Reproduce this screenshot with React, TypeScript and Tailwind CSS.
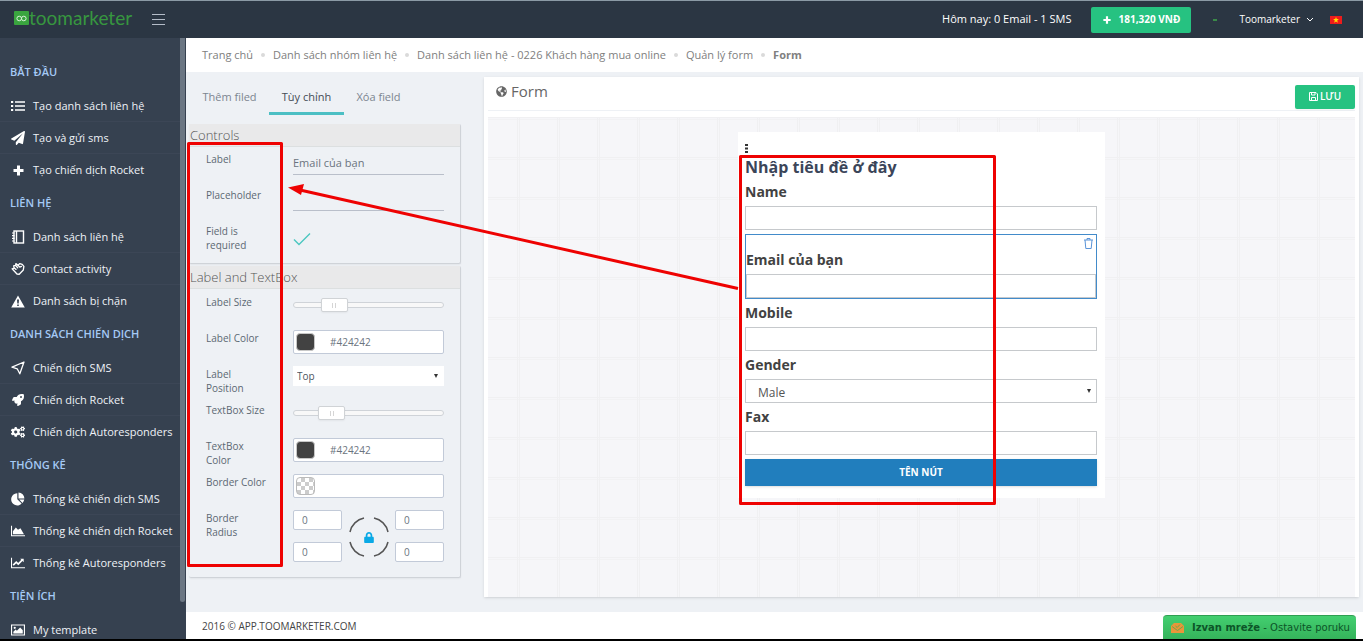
import React, { useState } from 'react';
import { FaPaperPlane, FaRocket, FaCogs, FaLock, FaGlobeAmericas } from 'react-icons/fa';

const PlusIcon = ({ className }: { className: string }) => (
  <svg viewBox="0 0 11 11" className={className} fill="currentColor">
    <path d="M4 .5h3V4h3.500v3H7v3.500H4V7H.5V4H4Z" />
  </svg>
);

const ListIcon = () => (
  <svg viewBox="0 0 14 12" className="w-3.5 h-3" fill="currentColor">
    <path d="M0 1h2.200v2H0zM0 5h2.200v2H0zM0 9h2.200v2H0zM4 1.200h10v1.500H4zM4 5.200h10v1.500H4zM4 9.200h10v1.500H4z" />
  </svg>
);

const NotebookIcon = () => (
  <svg viewBox="0 0 14 14" className="w-3.5 h-3.5" fill="none" stroke="currentColor">
    <rect x="3" y="1" width="9.500" height="12" strokeWidth="1.400" />
    <path d="M5.500 1v12" strokeWidth="1.400" />
    <path d="M1 3h2.500M1 5.600h2.500M1 8.300h2.500M1 11h2.500" strokeWidth="1.200" />
  </svg>
);

const HandIcon = () => (
  <svg viewBox="0 0 15 14" className="w-[15px] h-3.5" fill="none" stroke="currentColor" strokeWidth="1.400" strokeLinejoin="round" strokeLinecap="round">
    <path d="M1.200 6.800 3.500 6 2.800 3.600 5 3.200 5.200 1.200 7.500 3 9.500 1.200 12 2 13.800 4.200 13.200 8 8.800 12.600 6.400 12.400Z" />
    <path d="M5 3.200 7.200 5.600M7.500 3 9.400 5 11.200 4.200M3.500 6 5.400 7.400" />
  </svg>
);

const WarningIcon = () => (
  <svg viewBox="0 0 14 13" className="w-3.5 h-[13px]" fill="currentColor" fillRule="evenodd">
    <path d="M7 .5 13.800 12.500H.2ZM6 4.500 6.300 8.500H7.700L8 4.500ZM6.200 9.500V11H7.800V9.500Z" />
  </svg>
);

const PlaneOutline = () => (
  <svg viewBox="0 0 14 14" className="w-3.5 h-3.5" fill="none" stroke="currentColor" strokeWidth="1.300" strokeLinejoin="round">
    <path d="M13 1 1 6.200 6.200 7.800 8.800 12.800Z" />
  </svg>
);

const PieIcon = () => (
  <svg viewBox="0 0 14 14" className="w-3.5 h-3.5" fill="currentColor">
    <path d="M6.300 1.200V7.300L10.600 11.600A6.100 6.100 0 1 1 6.300 1.200Z" />
    <path d="M7.500.6A6 6 0 0 1 13.400 6.500H7.500ZM8.200 7.600H13.300A6 6 0 0 1 11.500 10.900Z" />
  </svg>
);

const AreaIcon = () => (
  <svg viewBox="0 0 16 12" className="w-[15px] h-3" fill="currentColor">
    <path d="M0 0h1.200v10.800H16V12H0ZM2.200 9.800V6.400L5.500 2 8 4.600 10.800 2.800 14.800 9.800Z" />
  </svg>
);

const LineIcon = () => (
  <svg viewBox="0 0 16 12" className="w-[15px] h-3" fill="currentColor">
    <path d="M0 0h1.200v10.800H16V12H0Z" />
    <path d="M2.500 8.500 6 5 8.300 7.200 13 2.500" fill="none" stroke="currentColor" strokeWidth="1.900" />
    <path d="M10.500 1H14.500V5Z" />
  </svg>
);

const PictureIcon = () => (
  <svg viewBox="0 0 15 12" className="w-[15px] h-3" fill="currentColor" fillRule="evenodd">
    <path d="M0 0H15V12H0ZM1.200 1.200V10.800H13.800V1.200Z" />
    <path d="M2.500 9.700V8L5 5.500 6.300 6.800 9.800 3.400 12.600 6.200V9.700Z" />
    <circle cx="4" cy="3.700" r="1.200" />
  </svg>
);

const SECTIONS = [
  {
    title: 'BẮT ĐẦU',
    items: [
      { label: 'Tạo danh sách liên hệ', icon: <ListIcon /> },
      { label: 'Tạo và gửi sms', icon: <FaPaperPlane /> },
      { label: 'Tạo chiến dịch Rocket', icon: <PlusIcon className="w-[11px] h-[11px]" /> },
    ],
  },
  {
    title: 'LIÊN HỆ',
    items: [
      { label: 'Danh sách liên hệ', icon: <NotebookIcon /> },
      { label: 'Contact activity', icon: <HandIcon /> },
      { label: 'Danh sách bị chặn', icon: <WarningIcon /> },
    ],
  },
  {
    title: 'DANH SÁCH CHIẾN DỊCH',
    items: [
      { label: 'Chiến dịch SMS', icon: <PlaneOutline /> },
      { label: 'Chiến dịch Rocket', icon: <FaRocket className="w-3 h-3" /> },
      { label: 'Chiến dịch Autoresponders', icon: <FaCogs className="w-[15px] h-3.5" /> },
    ],
  },
  {
    title: 'THỐNG KÊ',
    items: [
      { label: 'Thống kê chiến dịch SMS', icon: <PieIcon /> },
      { label: 'Thống kê chiến dịch Rocket', icon: <AreaIcon /> },
      { label: 'Thống kê Autoresponders', icon: <LineIcon /> },
    ],
  },
  {
    title: 'TIỆN ÍCH',
    items: [{ label: 'My template', icon: <PictureIcon /> }],
  },
];

const CRUMBS = ['Trang chủ', 'Danh sách nhóm liên hệ', 'Danh sách liên hệ - 0226 Khách hàng mua online', 'Quản lý form'];

const Header = () => (
  <header className="h-[38px] shrink-0 bg-[#2b3643] border-t border-[#8b9aa5] flex items-center text-white">
    <a href="#" className="ml-3.5 pb-1 flex items-center text-[#37963f]">
      <svg viewBox="0 0 15 14" className="w-[15px] h-3.5">
        <rect width="15" height="14" rx="1" fill="#3aa53f" />
        <circle cx="5.200" cy="7.500" r="2.300" fill="none" stroke="#d8f0d8" />
        <circle cx="9.800" cy="7.500" r="2.300" fill="none" stroke="#d8f0d8" />
      </svg>
      <span className="font-[Lato] text-[19px] leading-5">toomarketer</span>
    </a>
    <button aria-label="Menu" className="ml-5 flex flex-col gap-1">
      <span className="block w-[13px] h-px bg-[#b4bcc8]" />
      <span className="block w-[13px] h-px bg-[#b4bcc8]" />
      <span className="block w-[13px] h-px bg-[#b4bcc8]" />
    </button>
    <div className="ml-auto flex items-center">
      <span className="text-[11px]">Hôm nay: 0 Email - 1 SMS</span>
      <button className="ml-5 w-[100px] h-[26px] bg-[#26c281] rounded-xs flex items-center justify-center gap-2 text-[10px] font-bold">
        <PlusIcon className="w-2 h-2" />
        181,320 VNĐ
      </button>
      <span className="ml-[22px] w-1 h-0.5 bg-[#3a8a48]" />
      <button className="ml-[22px] flex items-center gap-1.5 text-[10px]">
        Toomarketer
        <svg viewBox="0 0 8 6" className="w-2 h-1.5" fill="none" stroke="currentColor">
          <path d="M1 1l3 3 3-3" />
        </svg>
      </button>
      <svg viewBox="0 0 12 8" className="ml-4 mr-[21px] w-3 h-2">
        <rect width="12" height="8" fill="#ee1c1c" />
        <path d="M6 1l.8 2h2.100L7.200 4.500l.7 2.200L6 5.400 4.100 6.700l.7-2.200L3.100 3h2.100z" fill="#ffde00" />
      </svg>
    </div>
  </header>
);

const Sidebar = () => (
  <nav className="w-[186px] shrink-0 bg-[#364150] overflow-hidden flex">
    <div className="flex-1 pt-[17px]">
      {SECTIONS.map((section) => (
        <div key={section.title}>
          <h3 className="h-[35px] pl-2.5 flex items-center text-[11px] font-semibold text-[#a5c9f5]">{section.title}</h3>
          <ul>
            {section.items.map((item) => (
              <li key={item.label} className="border-b border-[#3c4656] last:border-transparent">
                <a href="#" className="h-[31px] pt-px pl-[11px] flex items-center gap-2 text-[11px] text-[#eef2f7] whitespace-nowrap">
                  <span className="w-3.5 flex justify-center text-sm text-white">{item.icon}</span>
                  {item.label}
                </a>
              </li>
            ))}
          </ul>
        </div>
      ))}
    </div>
    <div className="w-[5px] mr-px mb-[37px] bg-[#6b7683] rounded-b-sm" />
  </nav>
);

const PanelTitle = ({ children }: { children: React.ReactNode }) => (
  <h4 className="h-[23px] pl-px pt-0.5 flex items-center bg-[#e9e9ea] border-b border-[#dcdfe0] text-[13px] font-light text-[#555]">{children}</h4>
);

interface RowProps {
  label: string;
  id: string;
  tall?: boolean;
  children: React.ReactNode;
}

const Row = ({ label, id, tall, children }: RowProps) => (
  <div className={tall ? 'flex h-[68px]' : 'flex h-9'}>
    <label htmlFor={id} className="w-[62px] ml-[17px] mr-[25px] pt-px text-[10px] leading-3.5 text-[#5c6873]">{label}</label>
    <div className="w-[151px]">{children}</div>
  </div>
);

const Slider = ({ id, start }: { id: string; start: number }) => (
  <input
    id={id}
    type="range"
    defaultValue={start}
    className="block w-full h-[22px] appearance-none bg-transparent [&::-webkit-slider-runnable-track]:h-1.5 [&::-webkit-slider-runnable-track]:rounded-full [&::-webkit-slider-runnable-track]:border [&::-webkit-slider-runnable-track]:border-[#cfd3d8] [&::-webkit-slider-runnable-track]:bg-[#f8f8f8] [&::-webkit-slider-thumb]:appearance-none [&::-webkit-slider-thumb]:w-[27px] [&::-webkit-slider-thumb]:h-3.5 [&::-webkit-slider-thumb]:-mt-[5px] [&::-webkit-slider-thumb]:rounded-xs [&::-webkit-slider-thumb]:border [&::-webkit-slider-thumb]:border-[#d0d3d6] [&::-webkit-slider-thumb]:bg-white [&::-webkit-slider-thumb]:bg-[linear-gradient(90deg,#d5d5d5_1px,transparent_1px,transparent_3px,#d5d5d5_3px)] [&::-webkit-slider-thumb]:bg-[length:4px_5px] [&::-webkit-slider-thumb]:bg-center [&::-webkit-slider-thumb]:bg-no-repeat [&::-webkit-slider-thumb]:shadow-xs"
  />
);

const ColorField = ({ id, value }: { id: string; value: string }) => (
  <div className="h-6 flex items-center bg-white border border-[#c2cad8] rounded-xs">
    <span
      className={
        value
          ? 'ml-0.5 w-[19px] h-[18px] shrink-0 rounded-sm border border-[#c8c8c8] bg-[#424242]'
          : 'ml-0.5 w-[19px] h-[18px] shrink-0 rounded-sm border border-[#bbb] bg-[conic-gradient(#ccc_25%,#fff_25%_50%,#ccc_50%_75%,#fff_75%)] bg-[length:8px_8px]'
      }
    />
    <input id={id} defaultValue={value} className="w-full min-w-0 pl-[15px] text-[10px] text-[#6b7480] outline-none" />
  </div>
);

const RadiusInput = ({ id, label }: { id: string; label: string }) => (
  <input id={id} aria-label={label} defaultValue="0" className="w-[49px] h-5 pl-2 bg-white border border-[#c2cad8] rounded-xs text-[10px] text-[#6b7480]" />
);

const Settings = () => {
  const [required, setRequired] = useState(true);

  return (
    <aside className="w-[298px] shrink-0 pl-[3px]">
      <div role="tablist" className="mb-[9px] pl-[5px] h-[43px] flex text-[11px] text-[#7c8590]">
        <button role="tab" aria-selected="false" className="w-[75px] pt-2.5 pr-1 border-b-3 border-transparent">Thêm filed</button>
        <button role="tab" aria-selected="true" className="w-[75px] pt-2.5 border-b-3 border-[#4cbfc4] text-[#444c56]">Tùy chỉnh</button>
        <button role="tab" aria-selected="false" className="w-[69px] pt-2.5 border-b-3 border-transparent">Xóa field</button>
      </div>

      <section className="w-[272px] h-[140px] border-r border-b border-[#cfd3d8] rounded-xs shadow-xs">
        <PanelTitle>Controls</PanelTitle>
        <div className="pt-1">
          <Row label="Label" id="label">
            <input id="label" defaultValue="Email của bạn" className="block w-full h-6 border-b border-[#b9bfca] text-[11px] text-[#6b7480] outline-none" />
          </Row>
          <Row label="Placeholder" id="placeholder">
            <input id="placeholder" className="block w-full h-6 border-b border-[#b9bfca] text-[11px] text-[#6b7480] outline-none" />
          </Row>
          <Row label="Field is required" id="required">
            <div className="relative w-[18px] h-4 mt-2">
              <input id="required" type="checkbox" checked={required} onChange={(e) => setRequired(e.target.checked)} className="absolute inset-0 w-full h-full opacity-0" />
              {required && (
                <svg viewBox="0 0 18 16" className="w-[18px] h-4 pointer-events-none" fill="none" stroke="#4cc7c0" strokeWidth="1.400">
                  <path d="M1 8.500l5 5L17 2.500" />
                </svg>
              )}
            </div>
          </Row>
        </div>
      </section>

      <section className="mt-0.5 w-[272px] h-[312px] border-r border-b border-[#cfd3d8] rounded-xs shadow-xs">
        <PanelTitle>Label and TextBox</PanelTitle>
        <div className="pt-[5px]">
          <Row label="Label Size" id="label-size"><Slider id="label-size" start={22} /></Row>
          <Row label="Label Color" id="label-color"><ColorField id="label-color" value="#424242" /></Row>
          <Row label="Label Position" id="label-position">
            <div className="relative">
              <select id="label-position" className="block w-full h-5 pl-1 appearance-none bg-white text-[10px] text-[#4d5560]">
                <option>Top</option>
                <option>Left</option>
              </select>
              <span className="absolute right-1.5 top-2 border-x-2 border-t-4 border-x-transparent border-t-[#333] pointer-events-none" />
            </div>
          </Row>
          <Row label="TextBox Size" id="textbox-size"><Slider id="textbox-size" start={20} /></Row>
          <Row label="TextBox Color" id="textbox-color"><ColorField id="textbox-color" value="#424242" /></Row>
          <Row label="Border Color" id="border-color"><ColorField id="border-color" value="" /></Row>
          <Row label="Border Radius" id="radius-tl" tall>
            <div className="flex justify-between">
              <div className="flex flex-col gap-3">
                <RadiusInput id="radius-tl" label="Top left" />
                <RadiusInput id="radius-bl" label="Bottom left" />
              </div>
              <button aria-label="Lock corners" className="relative mt-[7px] w-10 h-10 flex items-center justify-center text-[#0aa9e6]">
                <svg viewBox="0 0 40 40" className="absolute inset-0 w-10 h-10" fill="none" stroke="#555" strokeWidth="1.500">
                  <path d="M1 15A18 18 0 0 1 15 1M25 1A18 18 0 0 1 39 15M39 25A18 18 0 0 1 25 39M15 39A18 18 0 0 1 1 25" />
                </svg>
                <FaLock className="w-2.5 h-[11px]" />
              </button>
              <div className="flex flex-col gap-3">
                <RadiusInput id="radius-tr" label="Top right" />
                <RadiusInput id="radius-br" label="Bottom right" />
              </div>
            </div>
          </Row>
        </div>
      </section>
    </aside>
  );
};

const Field = ({ label, id }: { label: string; id: string }) => (
  <div className="mb-1">
    <label htmlFor={id} className="block h-6 leading-5 text-sm font-bold text-[#424242]">{label}</label>
    <input id={id} className="block w-full h-6 px-3 border border-[#c6c9cc] bg-white text-xs" />
  </div>
);

const FormPreview = () => (
  <section className="flex-1 min-w-0 mt-[5px] mr-1 mb-[15px] px-1 bg-white shadow-sm flex flex-col">
    <div className="h-[34px] pl-2 flex items-center justify-between border-b border-[#eef1f5]">
      <h2 className="flex items-center gap-1 pb-1 text-[15px] text-[#666]">
        <FaGlobeAmericas className="w-[11px] h-[11px]" />
        Form
      </h2>
      <button className="mt-1.5 w-[60px] h-6 bg-[#26c281] rounded-xs shadow-xs flex items-center justify-center gap-0.5 text-white text-[10px] font-semibold">
        <svg viewBox="0 0 9 9" className="w-[9px] h-[9px]" fill="none" stroke="currentColor">
          <path d="M.5.5H7L8.500 2V8.500H.5ZM2.500.5V3H6V.5M2.500 8.500V5.500H6.500V8.500" />
        </svg>
        LƯU
      </button>
    </div>
    <div className="mt-1.5 flex-1 pt-[15px] flex items-start justify-center bg-[#f6f6f9] bg-[linear-gradient(90deg,transparent_29px,#f0f0f2_29px,#f0f0f2_30px,transparent_30px,transparent_31px,#f0f0f2_31px,#f0f0f2_32px,transparent_32px),linear-gradient(#f0f0f2_1px,transparent_1px,transparent_2px,#f2f2f4_2px,#f2f2f4_3px,transparent_3px)] bg-[length:40px_40px]">
      <form className="w-[367px] pl-[7px] pr-2 pt-3 pb-3 bg-white" onSubmit={(e) => e.preventDefault()}>
        <svg viewBox="0 0 3 9" className="block w-[3px] h-[9px]" fill="#333">
          <path d="M0 0h3v2H0zM0 3.500h3v2H0zM0 7h3v2H0z" />
        </svg>
        <h1 className="h-[27px] mt-0.5 leading-6 text-base font-bold text-[#3b4559]">Nhập tiêu đề ở đây</h1>
        <Field label="Name" id="f-name" />
        <div className="relative mb-1 h-[65px] pt-[15px] border border-[#428bca]">
          <button type="button" aria-label="Delete field" className="absolute right-[3px] top-[3px] text-[#5a94d8]">
            <svg viewBox="0 0 9 11" className="w-[9px] h-[11px]" fill="none" stroke="currentColor">
              <path d="M0 2h9M3 2V.5h3V2M1 2l.8 8.500h5.400L8 2" />
            </svg>
          </button>
          <label htmlFor="f-email" className="block h-6 leading-5 text-sm font-bold text-[#424242]">Email của bạn</label>
          <input id="f-email" className="block w-full h-6 px-3 border border-[#c6c9cc] text-xs" />
        </div>
        <Field label="Mobile" id="f-mobile" />
        <div className="mb-1">
          <label htmlFor="f-gender" className="block h-6 leading-5 text-sm font-bold text-[#424242]">Gender</label>
          <div className="relative">
            <select id="f-gender" className="block w-full h-6 px-3 pt-1 appearance-none border border-[#c6c9cc] bg-white text-xs text-[#555]">
              <option>Male</option>
              <option>Female</option>
            </select>
            <span className="absolute right-1.5 top-2.5 border-x-2 border-t-4 border-x-transparent border-t-[#333] pointer-events-none" />
          </div>
        </div>
        <Field label="Fax" id="f-fax" />
        <button className="block w-full h-[27px] bg-[#217ebd] shadow-sm text-white text-[10px] font-bold">TÊN NÚT</button>
      </form>
    </div>
  </section>
);

// Red boxes and the arrow that ties the selected field to its settings
const Annotations = () => (
  <svg viewBox="0 0 1363 641" className="absolute left-0 top-0 w-[1363px] h-[641px] pointer-events-none" fill="none" stroke="#ee0202" strokeWidth="3">
    <rect x="188.500" y="143.500" width="93" height="422" strokeLinejoin="round" />
    <rect x="740.500" y="156.500" width="254" height="347" strokeLinejoin="round" />
    <path d="M738 288.500 300 190" />
    <path d="M288 187.500 304 184 301 195Z" fill="#ee0202" stroke="none" />
  </svg>
);

export default function App() {
  return (
    <div className="relative h-screen overflow-hidden flex flex-col border-b-2 border-black bg-[#eef1f5] font-['Open_Sans',sans-serif]">
      <Header />
      <div className="flex-1 min-h-0 flex">
        <Sidebar />
        <div className="flex-1 min-w-0 flex flex-col">
          <ol className="h-[34px] shrink-0 pl-4 flex items-center bg-white text-[11px] text-[#808080]">
            {CRUMBS.map((crumb) => (
              <li key={crumb} className="flex items-center">
                <a href="#">{crumb}</a>
                <span className="mx-2 w-1 h-1 rounded-full bg-[#dadada]" />
              </li>
            ))}
            <li className="font-bold">Form</li>
          </ol>
          <main className="flex-1 min-h-0 flex">
            <Settings />
            <FormPreview />
          </main>
          <footer className="h-[27px] shrink-0 pl-4 pt-0.5 flex items-center bg-white text-[10px] text-[#444]">2016 © APP.TOOMARKETER.COM</footer>
        </div>
      </div>
      <a href="#" className="absolute right-[7px] bottom-0 w-[193px] h-6 pl-2 flex items-center gap-2 rounded-t-sm border-t border-[#2f9f52] bg-linear-to-b from-[#43cf70] to-[#35b35b] font-['DejaVu_Sans',sans-serif] text-[10px] text-[#0c5528] whitespace-nowrap">
        <svg viewBox="0 0 13 10" className="w-[13px] h-2.5">
          <path d="M0 3 3 0H10L13 3V10H0Z" fill="#e8963a" />
          <path d="M1 3.500 6.500 7.500 12 3.500M4.500 3 6.200 4.500 9 1.500" fill="none" stroke="#6fa845" />
        </svg>
        <span><b>Izvan mreže</b> - Ostavite poruku</span>
      </a>
      <Annotations />
    </div>
  );
}
